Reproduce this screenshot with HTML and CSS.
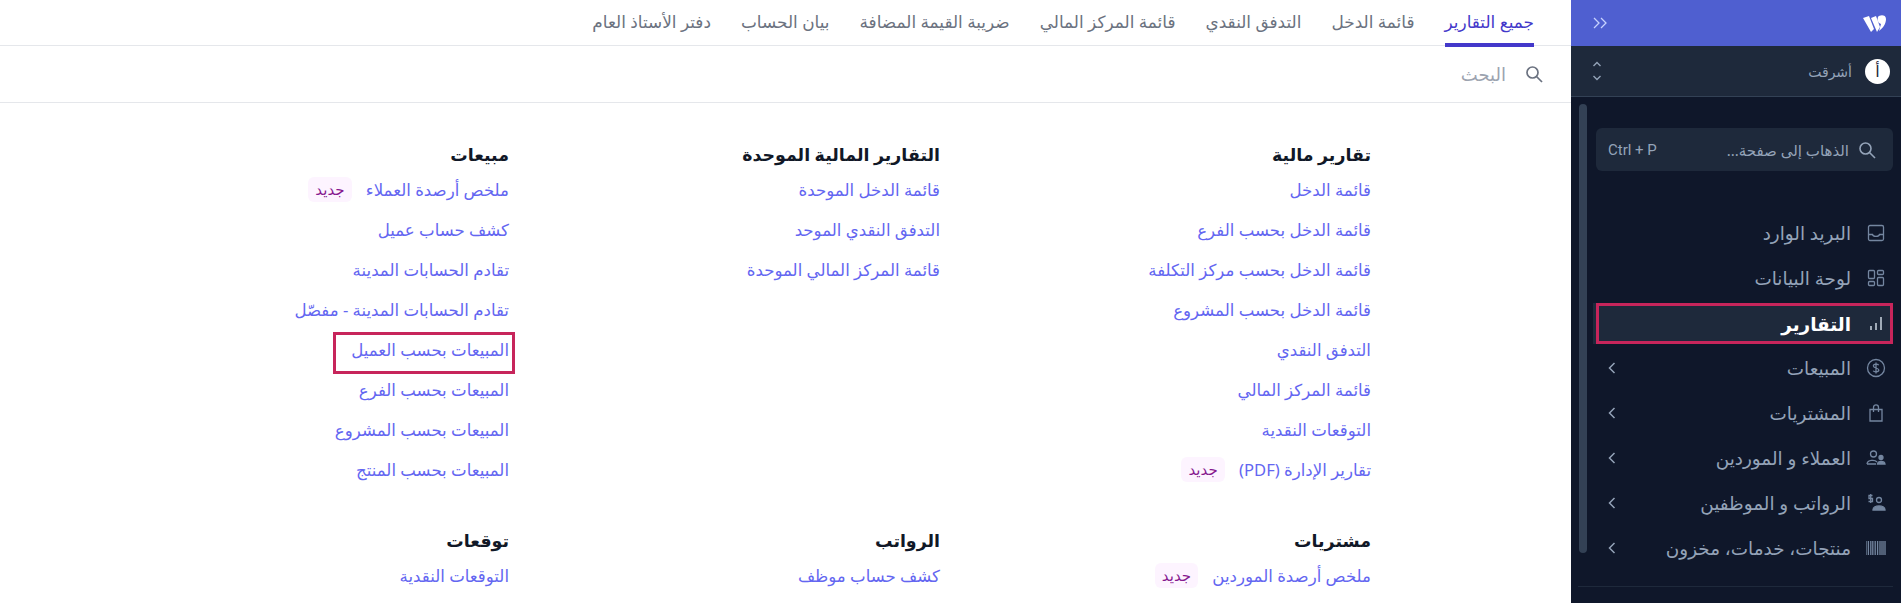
FILE: index.html
```html
<!DOCTYPE html>
<html lang="ar" dir="rtl">
  <head>
    <meta charset="UTF-8" />
    <title>التقارير</title>
    <link rel="stylesheet" href="styles.css">
  </head>
  <body>
    <!-- start sidebar -->
    <aside class="sidebar">
      <div class="brand-bar">
        <svg class="brand-logo" viewBox="0 0 23 17"><path d="M0 3 L6 1 L11 14 L8 17 Z M8 3 L13 1 L17 12 L14 17 Z M15 2 C16 0 23 -1 23 4 C23 9 20 13 16 16 L18 9 C15 8 14 5 15 2 Z" fill="#fff"/></svg>
        <svg class="brand-toggle" viewBox="0 0 16 14" fill="none" stroke="#c7d2fe" stroke-width="1.3"><path d="M2 2 L7 7 L2 12 M9 2 L14 7 L9 12"/></svg>
      </div>
      <div class="org-row">
        <span class="org-avatar">أ</span>
        <span class="org-name">أشرقت</span>
        <svg class="org-switch" viewBox="0 0 10 22" fill="none" stroke="#94a3b8" stroke-width="1.4"><path d="M1.5 6 L5 2.5 L8.5 6 M1.5 16 L5 19.5 L8.5 16"/></svg>
      </div>
      <div class="side-scroll">
        <div class="scroll-thumb"></div>
        <div class="search-box">
          <svg class="search-icon" viewBox="0 0 20 20" fill="none" stroke="#94a3b8" stroke-width="1.6"><circle cx="8.5" cy="8.5" r="5.5"/><path d="M12.5 12.5 L18 18"/></svg>
          <span class="search-text">الذهاب إلى صفحة...</span>
          <span class="search-key" dir="ltr">Ctrl + P</span>
        </div>
        <nav class="side-nav">
          <a class="side-item">
            <svg viewBox="0 0 20 20" fill="none" stroke="#7486a0" stroke-width="1.3"><rect x="2.5" y="2.5" width="15" height="15" rx="1.5"/><path d="M2.5 11.5 H6.5 C7 14 13 14 13.5 11.5 H17.5"/></svg>
            <span>البريد الوارد</span>
          </a>
          <a class="side-item">
            <svg viewBox="0 0 20 20" fill="none" stroke="#7486a0" stroke-width="1.3"><rect x="2.5" y="2.5" width="6" height="8" rx="1"/><rect x="11.5" y="2.5" width="6" height="4" rx="1"/><rect x="11.5" y="9.5" width="6" height="8" rx="1"/><rect x="2.5" y="13.5" width="6" height="4" rx="1"/></svg>
            <span>لوحة البيانات</span>
          </a>
          <a class="side-item is-active">
            <svg viewBox="0 0 20 20" fill="none" stroke="#cbd5e1" stroke-width="1.5"><path d="M5 16 V12 M10 16 V9 M15 16 V3"/></svg>
            <span>التقارير</span>
          </a>
          <a class="side-item">
            <svg viewBox="0 0 20 20" fill="none" stroke="#7486a0" stroke-width="1.3"><circle cx="10" cy="10" r="8.5"/><path d="M12.6 7.2 C12 5.8 7.4 5.6 7.4 8 C7.4 10.4 12.8 9.6 12.8 12 C12.8 14.4 8 14.2 7.2 12.8 M10 4.4 V15.6"/></svg>
            <span>المبيعات</span>
            <svg class="side-arrow" viewBox="0 0 10 14" fill="none" stroke="#94a3b8" stroke-width="1.5"><path d="M7.5 2 L2.5 7 L7.5 12"/></svg>
          </a>
          <a class="side-item">
            <svg viewBox="0 0 20 20" fill="none" stroke="#7486a0" stroke-width="1.3"><path d="M4 6.5 H16 V18 H4 Z M7.5 9 V4.5 C7.5 1 12.5 1 12.5 4.5 V9"/></svg>
            <span>المشتريات</span>
            <svg class="side-arrow" viewBox="0 0 10 14" fill="none" stroke="#94a3b8" stroke-width="1.5"><path d="M7.5 2 L2.5 7 L7.5 12"/></svg>
          </a>
          <a class="side-item">
            <svg viewBox="0 0 20 20" fill="none" stroke="#7486a0" stroke-width="1.3"><circle cx="7.5" cy="6" r="3"/><path d="M1 16 C1.5 11.5 9 11.5 11 14 M1 16 H10"/><circle cx="15" cy="9.5" r="2" fill="#7486a0"/><path d="M11.5 16 C12 12.5 18.5 12.5 19 16 Z" fill="#7486a0"/></svg>
            <span>العملاء و الموردين</span>
            <svg class="side-arrow" viewBox="0 0 10 14" fill="none" stroke="#94a3b8" stroke-width="1.5"><path d="M7.5 2 L2.5 7 L7.5 12"/></svg>
          </a>
          <a class="side-item">
            <svg viewBox="0 0 20 20" fill="none" stroke="#7486a0" stroke-width="1.3"><circle cx="13" cy="7" r="2.5"/><path d="M7 17 C7 11.5 19 11.5 19 17 Z" fill="#7486a0"/><path d="M6.5 2.5 H3 V5.5 H6.5 V8.5 H2.5 M4.7 1 V10"/></svg>
            <span>الرواتب و الموظفين</span>
            <svg class="side-arrow" viewBox="0 0 10 14" fill="none" stroke="#94a3b8" stroke-width="1.5"><path d="M7.5 2 L2.5 7 L7.5 12"/></svg>
          </a>
          <a class="side-item">
            <svg viewBox="0 0 20 20" stroke="#7486a0" stroke-width="1.3"><path d="M0 3 V17 M2.4 3 V17 M4.8 3 V17 M6.8 3 V17 M9.2 3 V17 M11.6 3 V17 M14 3 V17 M16 3 V17 M18 3 V17 M20 3 V17"/></svg>
            <span>منتجات، خدمات، مخزون</span>
            <svg class="side-arrow" viewBox="0 0 10 14" fill="none" stroke="#94a3b8" stroke-width="1.5"><path d="M7.5 2 L2.5 7 L7.5 12"/></svg>
          </a>
        </nav>
        <hr class="side-divider" />
      </div>
    </aside>
    <!-- end sidebar -->

    <!-- start main -->
    <main class="main">
      <div class="tabs">
        <a class="tab is-current">جميع التقارير</a>
        <a class="tab">قائمة الدخل</a>
        <a class="tab">التدفق النقدي</a>
        <a class="tab">قائمة المركز المالي</a>
        <a class="tab">ضريبة القيمة المضافة</a>
        <a class="tab">بيان الحساب</a>
        <a class="tab">دفتر الأستاذ العام</a>
      </div>
      <div class="report-search">
        <svg viewBox="0 0 20 20" fill="none" stroke="#6b7280" stroke-width="1.7"><circle cx="8.5" cy="8.5" r="5.5"/><path d="M12.5 12.5 L18 18"/></svg>
        <span>البحث</span>
      </div>
      <div class="report-grid">
        <section class="report-group">
          <h3>تقارير مالية</h3>
          <a class="report-link">قائمة الدخل</a>
          <a class="report-link">قائمة الدخل بحسب الفرع</a>
          <a class="report-link">قائمة الدخل بحسب مركز التكلفة</a>
          <a class="report-link">قائمة الدخل بحسب المشروع</a>
          <a class="report-link">التدفق النقدي</a>
          <a class="report-link">قائمة المركز المالي</a>
          <a class="report-link">التوقعات النقدية</a>
          <a class="report-link">تقارير الإدارة (PDF) <span class="new-tag">جديد</span></a>
        </section>
        <section class="report-group">
          <h3>التقارير المالية الموحدة</h3>
          <a class="report-link">قائمة الدخل الموحدة</a>
          <a class="report-link">التدفق النقدي الموحد</a>
          <a class="report-link">قائمة المركز المالي الموحدة</a>
        </section>
        <section class="report-group">
          <h3>مبيعات</h3>
          <a class="report-link">ملخص أرصدة العملاء <span class="new-tag">جديد</span></a>
          <a class="report-link">كشف حساب عميل</a>
          <a class="report-link">تقادم الحسابات المدينة</a>
          <a class="report-link">تقادم الحسابات المدينة - مفصّل</a>
          <a class="report-link is-marked">المبيعات بحسب العميل</a>
          <a class="report-link">المبيعات بحسب الفرع</a>
          <a class="report-link">المبيعات بحسب المشروع</a>
          <a class="report-link">المبيعات بحسب المنتج</a>
        </section>
        <section class="report-group">
          <h3>مشتريات</h3>
          <a class="report-link">ملخص أرصدة الموردين <span class="new-tag">جديد</span></a>
        </section>
        <section class="report-group">
          <h3>الرواتب</h3>
          <a class="report-link">كشف حساب موظف</a>
        </section>
        <section class="report-group">
          <h3>توقعات</h3>
          <a class="report-link">التوقعات النقدية</a>
        </section>
      </div>
    </main>
    <!-- end main -->
  </body>
</html>
```

FILE: styles.css
```css
* {
  box-sizing: border-box;
}
html,
body {
  height: 603px;
}
body {
  margin: 0;
  display: flex;
  overflow: hidden;
  background-color: white;
  font-family: "Noto Sans", "DejaVu Sans", sans-serif;
}

/* sidebar */
.sidebar {
  width: 330px;
  flex: none;
  background-color: #0f172a;
  color: #94a3b8;
}
.brand-bar {
  height: 46px;
  background-color: #4f5fd0;
  display: flex;
  align-items: center;
  justify-content: space-between;
  padding: 0 15px 0 21px;
}
.brand-logo {
  width: 23px;
  height: 17px;
}
.brand-toggle {
  width: 16px;
  height: 14px;
}
.org-row {
  height: 51px;
  background-color: #1e293b;
  border-bottom: 1px solid #334155;
  display: flex;
  align-items: center;
  padding: 0 11px 0 21px;
  font-size: 14px;
}
.org-avatar {
  width: 25px;
  height: 25px;
  border-radius: 50%;
  background-color: white;
  color: #1e293b;
  text-align: center;
  line-height: 25px;
  font-size: 16px;
}
.org-name {
  margin-right: 13px;
  flex: 1;
}
.org-switch {
  width: 10px;
  height: 22px;
}
.side-scroll {
  position: relative;
  padding: 31px 8px 0 7px;
}
.scroll-thumb {
  position: absolute;
  left: 8px;
  top: 7px;
  width: 8px;
  height: 449px;
  border-radius: 4px;
  background-color: #334155;
}
.search-box {
  height: 43px;
  margin-left: 18px;
  background-color: #1e293b;
  border-radius: 6px;
  display: flex;
  align-items: center;
  padding: 0 16px 0 12px;
  font-size: 15px;
}
.search-icon {
  width: 20px;
  height: 20px;
}
.search-text {
  margin-right: 8px;
  flex: 1;
}
.search-key {
  font-family: Roboto, sans-serif;
}
.side-nav {
  margin-top: 39px;
  margin-left: 18px;
}
.side-item {
  height: 45px;
  display: flex;
  align-items: center;
  padding: 0 7px 0 11px;
  font-size: 18.4px;
  gap: 15px;
}
.side-item span {
  flex: 1;
}
.side-item svg {
  width: 20px;
  height: 20px;
  flex: none;
}
.side-item svg.side-arrow {
  width: 10px;
  height: 14px;
}
.side-item.is-active {
  height: 41px;
  margin: 3px 0 1px;
  background-color: #1e293b;
  color: white;
  font-weight: bold;
  outline: 3px solid #c7255b;
  outline-offset: -3px;
  box-shadow: -3px 0 0 #1e293b;
}
.side-divider {
  margin: 16px 0 0 0;
  border: none;
  border-top: 1px solid #1e293b;
}

/* main */
.main {
  flex: 1;
  min-width: 0;
}
.tabs {
  height: 46px;
  border-bottom: 1px solid #e5e7eb;
  display: flex;
  gap: 30px;
  padding-right: 37px;
}
.tab {
  height: 47px;
  padding-top: 10px;
  font-size: 16.9px;
  color: #6b7280;
  border-bottom: 4px solid transparent;
}
.tab.is-current {
  color: #4338ca;
  border-bottom-color: #4338ca;
}
.report-search {
  height: 57px;
  border-bottom: 1px solid #e5e7eb;
  display: flex;
  align-items: center;
  gap: 18px;
  padding-right: 27px;
  font-size: 18px;
  color: #9ca3af;
}
.report-search svg {
  width: 20px;
  height: 20px;
}
.report-grid {
  display: grid;
  grid-template-columns: repeat(3, 431px);
  row-gap: 37px;
  padding: 37px 200px 0 0;
}
.report-group {
  display: flex;
  flex-direction: column;
  align-items: flex-start;
}
.report-group h3 {
  margin: 0;
  height: 29px;
  font-size: 17.4px;
  line-height: 29px;
  font-weight: 600;
  color: #111827;
}
.report-link {
  height: 40px;
  display: flex;
  align-items: center;
  font-size: 16.6px;
  color: #6366f1;
  white-space: pre;
}
.report-link.is-marked {
  height: 42px;
  margin: 3px -6px -5px 0;
  padding: 0 6px 8px 18px;
  outline: 3px solid #c7255b;
  outline-offset: -3px;
}
.new-tag {
  margin-right: 10px;
  padding: 0 7px;
  height: 25px;
  line-height: 25px;
  border-radius: 6px;
  background-color: #fdf4ff;
  color: #86198f;
  font-size: 15px;
}
```
